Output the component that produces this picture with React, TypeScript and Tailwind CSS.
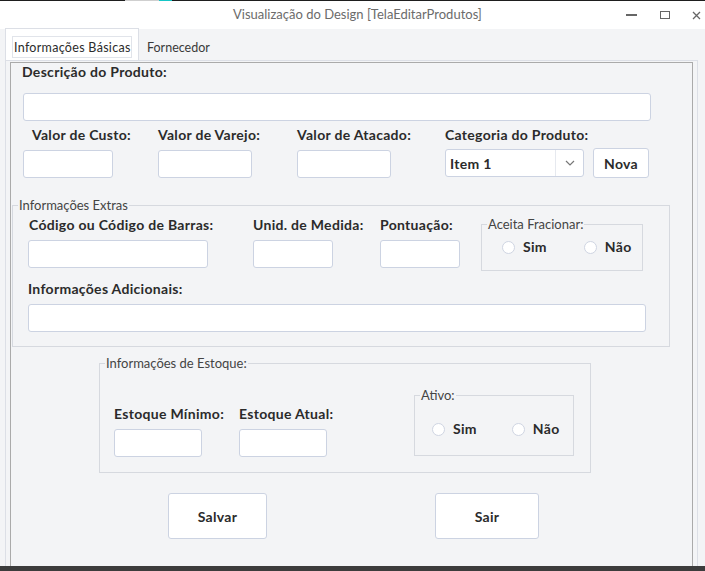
import React from 'react';

const labelCls =
  'block h-[18px] whitespace-nowrap text-[14px] font-bold leading-[18px] tracking-[0.3px] text-[#2b2b2b]';
const inputCls = 'h-[28px] rounded-[3px] border border-[#ccd3e2] bg-white';
const btnCls =
  'rounded-[3px] border border-[#ccd3e2] bg-white text-[14px] font-bold tracking-[0.3px] text-[#2b2b2b]';

function Field({ label, w, offset = 0 }: { label: string; w: string; offset?: number }) {
  return (
    <div className={`flex flex-col ${w}`}>
      <span className={labelCls} style={{ marginLeft: offset }}>
        {label}
      </span>
      <div className={`mt-[6px] w-full ${inputCls}`} />
    </div>
  );
}

function Radio({ label, className = '' }: { label: string; className?: string }) {
  return (
    <div className={`flex h-[18px] items-center ${className}`}>
      <span className="h-[13px] w-[13px] rounded-full border border-[#cfd5e2] bg-white" />
      <span className="ml-[8px] text-[14px] font-bold leading-[18px] tracking-[0.3px] text-[#2b2b2b]">{label}</span>
    </div>
  );
}

function Legend({ children }: { children: React.ReactNode }) {
  return (
    <legend className="ml-[5px] px-[1px] text-[13px] leading-[14px] text-[#444]">{children}</legend>
  );
}

export default function App() {
  return (
    <div
      className="flex h-[571px] w-[705px] flex-col overflow-hidden bg-[#f3f4f6]"
      style={{ fontFamily: 'Lato, "Noto Sans", sans-serif' }}
    >
      {/* screen edge */}
      <div className="flex h-px shrink-0">
        <div className="w-[125px] bg-[#1e1e1e]" />
        <div className="w-[34px] bg-[#cfcfcf]" />
        <div className="w-[13px] bg-[#16c6c6]" />
        <div className="flex-1 bg-[#1e1e1e]" />
      </div>

      {/* title bar */}
      <div className="flex h-[28px] shrink-0 items-center bg-white">
        <span className="ml-[233px] text-[13px] text-[#6b6b6b]">Visualização do Design [TelaEditarProdutos]</span>
        <div className="flex-1" />
        <div className="flex items-center">
          <div className="h-[2px] w-[11px] bg-[#666]" />
          <div className="ml-[23px] h-[8px] w-[10px] border-[1.5px] border-[#666]" />
          <svg className="ml-[22px] mr-[4px]" width="9" height="9" viewBox="0 0 9 9">
            <path d="M1 1 L8 8 M8 1 L1 8" stroke="#666" strokeWidth="1.3" />
          </svg>
        </div>
      </div>

      {/* tabs */}
      <div className="flex h-[31px] shrink-0 items-end pl-[5px]">
        <div className="h-[32px] w-[134px] border-x border-t border-[#dcdfe6] bg-white px-[6px] pt-[7px]">
          <div className="flex h-[22px] items-center border border-[#e1e4ea] pl-[1px] pt-[2px] text-[12.5px] tracking-[0.3px] text-[#2b2b2b]">
            Informações Básicas
          </div>
        </div>
        <div className="flex h-[31px] items-center pl-[8px] pt-[8px] text-[12.5px] text-[#3a3a3a]">Fornecedor</div>
      </div>

      {/* panel */}
      <div className="ml-[5px] flex w-[693px] flex-1 flex-col border-x border-t border-[#dcdfe6] px-[4px] pt-px">
        <div className="flex flex-1 flex-col border-x border-t border-[#aaaaaa]">
          <span className={`${labelCls} ml-[11px]`}>Descrição do Produto:</span>
          <div className={`ml-[12px] mt-[12px] w-[628px] ${inputCls}`} />

          <div className="ml-[12px] mt-[5px] flex items-start">
            <Field label="Valor de Custo:" w="w-[90px]" offset={9} />
            <div className="ml-[45px]">
              <Field label="Valor de Varejo:" w="w-[94px]" />
            </div>
            <div className="ml-[45px]">
              <Field label="Valor de Atacado:" w="w-[94px]" />
            </div>
            <div className="ml-[54px] flex w-[139px] flex-col">
              <span className={labelCls}>Categoria do Produto:</span>
              <div className={`mt-[5px] flex items-center ${inputCls}`}>
                <span className="ml-[4px] flex-1 text-[14px] font-bold tracking-[0.3px] text-[#2b2b2b]">Item 1</span>
                <div className="flex h-full w-[28px] items-center justify-center border-l border-[#e6e9ef]">
                  <svg width="10" height="6" viewBox="0 0 10 6">
                    <path d="M1 1 L5 5 L9 1" fill="none" stroke="#777" strokeWidth="1.2" />
                  </svg>
                </div>
              </div>
            </div>
            <div className="ml-[9px] flex flex-col">
              <span className="h-[18px]" />
              <button className={`mt-[4px] h-[30px] w-[56px] ${btnCls}`}>Nova</button>
            </div>
          </div>

          <fieldset className="ml-px mt-[20px] w-[658px] border border-[#d6d9df] pb-[14px]">
            <Legend>Informações Extras</Legend>
            <div className="mt-[4px] flex items-start pl-[15px]">
              <Field label="Código ou Código de Barras:" w="w-[180px]" offset={1} />
              <div className="ml-[45px]">
                <Field label="Unid. de Medida:" w="w-[80px]" />
              </div>
              <div className="ml-[47px]">
                <Field label="Pontuação:" w="w-[80px]" />
              </div>
              <fieldset className="ml-[21px] mt-px w-[162px] border border-[#d6d9df] pb-[14px]">
                <Legend>Aceita Fracionar:</Legend>
                <div className="ml-[20px] mt-[7px] flex">
                  <Radio label="Sim" />
                  <Radio label="Não" className="ml-[37px]" />
                </div>
              </fieldset>
            </div>
            <span className={`${labelCls} ml-[15px] mt-[9px]`}>Informações Adicionais:</span>
            <div className={`ml-[15px] mt-[6px] w-[618px] ${inputCls}`} />
          </fieldset>

          <fieldset className="ml-[88px] mt-[9px] w-[492px] border border-[#d6d9df] pb-[15px]">
            <Legend>Informações de Estoque:</Legend>
            <div className="mt-[18px] flex items-start pl-[14px]">
              <div className="mt-[17px]">
                <Field label="Estoque Mínimo:" w="w-[88px]" />
              </div>
              <div className="ml-[37px] mt-[17px]">
                <Field label="Estoque Atual:" w="w-[88px]" />
              </div>
              <fieldset className="ml-[87px] w-[160px] border border-[#d6d9df] pb-[17px]">
                <Legend>Ativo:</Legend>
                <div className="ml-[17px] mt-[18px] flex">
                  <Radio label="Sim" />
                  <Radio label="Não" className="ml-[35px]" />
                </div>
              </fieldset>
            </div>
          </fieldset>

          <div className="ml-[157px] mt-[20px] flex">
            <button className={`h-[46px] w-[99px] ${btnCls}`}>Salvar</button>
            <button className={`ml-[168px] h-[46px] w-[104px] ${btnCls}`}>Sair</button>
          </div>
        </div>
      </div>

      <div className="h-[5px] shrink-0 bg-[#3c3c3c]" />
    </div>
  );
}
